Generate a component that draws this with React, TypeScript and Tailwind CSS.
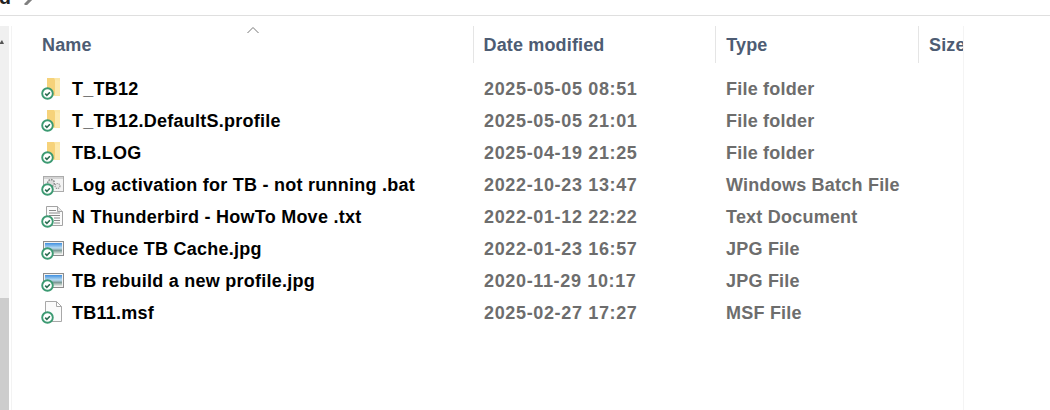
import React from 'react';

type Kind = 'folder' | 'bat' | 'txt' | 'jpg' | 'msf';

interface FileRow {
  name: string;
  date: string;
  type: string;
  kind: Kind;
}

const rows: FileRow[] = [
  { name: 'T_TB12', date: '2025-05-05 08:51', type: 'File folder', kind: 'folder' },
  { name: 'T_TB12.DefaultS.profile', date: '2025-05-05 21:01', type: 'File folder', kind: 'folder' },
  { name: 'TB.LOG', date: '2025-04-19 21:25', type: 'File folder', kind: 'folder' },
  { name: 'Log activation for TB - not running .bat', date: '2022-10-23 13:47', type: 'Windows Batch File', kind: 'bat' },
  { name: 'N Thunderbird - HowTo Move .txt', date: '2022-01-12 22:22', type: 'Text Document', kind: 'txt' },
  { name: 'Reduce TB Cache.jpg', date: '2022-01-23 16:57', type: 'JPG File', kind: 'jpg' },
  { name: 'TB rebuild a new profile.jpg', date: '2020-11-29 10:17', type: 'JPG File', kind: 'jpg' },
  { name: 'TB11.msf', date: '2025-02-27 17:27', type: 'MSF File', kind: 'msf' },
];

const KindShape = ({ kind }: { kind: Kind }) => {
  if (kind === 'folder') {
    return (
      <>
        <path d="M6 1h13v18H6z" fill="#fbe6a6" />
        <path d="M6 1h7l1 2v15l-8 1z" fill="#f6d27a" />
        <path d="M13 1l1 2v15h5V4l-5-1z" fill="#fde9ad" />
      </>
    );
  }
  if (kind === 'bat') {
    return (
      <>
        <rect x="2.500" y="3.500" width="20" height="15" fill="#f3f3f3" stroke="#ababab" />
        <rect x="3" y="4" width="19" height="2" fill="#d4d4d4" />
        <circle cx="10" cy="10" r="3.400" fill="#dcdcdc" stroke="#8d8d8d" strokeWidth="1.500" strokeDasharray="1.600 1" />
        <circle cx="16.500" cy="13" r="2.500" fill="#e8e8e8" stroke="#999999" strokeWidth="1.200" strokeDasharray="1.300 .8" />
      </>
    );
  }
  if (kind === 'txt') {
    return (
      <>
        <path d="M5.500 1.500h11l5 5v14h-16z" fill="#fbfbfb" stroke="#a3a3a3" />
        <path d="M16.500 1.500v5h5" fill="#e8e8e8" stroke="#a3a3a3" />
        <path d="M8 5.500h7M8 8h11M8 10.500h11M13 13h6M13 15.500h6M13 18h6" stroke="#8a8a8a" />
      </>
    );
  }
  if (kind === 'jpg') {
    return (
      <>
        <defs>
          <linearGradient id="sky" x1="0" y1="0" x2="0" y2="1">
            <stop offset="0" stopColor="#3f8fe0" />
            <stop offset=".45" stopColor="#b9dcf2" />
            <stop offset=".68" stopColor="#7d9a96" />
            <stop offset="1" stopColor="#e7ece6" />
          </linearGradient>
        </defs>
        <rect x="2.500" y="4.500" width="20" height="14" fill="#f2f2f2" stroke="#8d8d8d" />
        <rect x="4" y="6" width="17" height="11" fill="url(#sky)" />
      </>
    );
  }
  return <path d="M4.500 .5h11l5 5v15h-16zM15.500 .5v5h5" fill="#fbfbfb" stroke="#a8a8a8" />;
};

const FileIcon = ({ kind }: { kind: Kind }) => (
  <svg width="24" height="24" viewBox="0 0 24 24" className="shrink-0">
    <KindShape kind={kind} />
    <circle cx="6.500" cy="16.500" r="5.300" fill="#ffffff" stroke="#3c9a72" strokeWidth="1.900" />
    <path d="M4.200 16.600l1.700 1.700 3-3" fill="none" stroke="#2c6e52" strokeWidth="1.600" />
  </svg>
);

const HeaderCell = ({ label, className }: { label: string; className: string }) => (
  <div className={`flex h-[37px] items-center overflow-hidden whitespace-nowrap border-r border-[#e5e5e5] pt-[1px] ${className}`}>
    {label}
  </div>
);

export default function App() {
  return (
    <div className="flex h-[410px] w-[1050px] flex-col overflow-hidden bg-white font-['Liberation_Sans',Arial,sans-serif] text-[18px] font-bold">
      {/* breadcrumb strip, cut off at the top */}
      <div className="flex h-4 shrink-0 items-end overflow-hidden border-b border-[#dfdfdf]">
        <span className="ml-[-1px] mb-[8px] w-[25px] text-[19.5px] leading-none text-[#222]">d</span>
        <svg width="10" height="10" viewBox="0 0 10 10" className="mb-[10px]">
          <path d="M1 10l8-8" fill="none" stroke="#808080" strokeWidth="3" />
        </svg>
      </div>

      <div className="flex min-h-0 flex-1 pt-[10px]">
        {/* left scrollbar */}
        <div className="flex w-[9px] shrink-0 flex-col bg-[#f0f0f0]">
          <div className="h-[272px] shrink-0 overflow-hidden">
            <svg width="4" height="6" viewBox="0 0 4 6" className="mt-[13px]">
              <path d="M-1 5l3-4 2 4z" fill="#555555" />
            </svg>
          </div>
          <div className="flex-1 bg-[#cdcdcd]" />
        </div>
        <div className="w-[3px] shrink-0 border-r border-[#f3f3f3]" />

        <div className="w-[952px] shrink-0 border-r border-[#f4f4f4]">
          <div className="relative flex tracking-[0.15px] text-[#4d5c73]">
            <HeaderCell label="Name" className="w-[462px] pl-[30px]" />
            <HeaderCell label="Date modified" className="w-[243px] pl-[10px]" />
            <HeaderCell label="Type" className="w-[203px] pl-[10px]" />
            <div className="flex h-[37px] w-[44px] items-center overflow-hidden whitespace-nowrap pl-[10px] pt-[1px]">Size</div>
            <svg width="14" height="8" viewBox="0 0 14 8" className="absolute left-[234px] top-0">
              <path d="M1.500 7L7 1.500 12.500 7" fill="none" stroke="#777" />
            </svg>
          </div>

          <div className="pt-[10px]">
            {rows.map(row => (
              <div key={row.name} className="flex h-8 items-center">
                <div className="flex w-[462px] items-center gap-[7px] pl-[29px] tracking-[0.25px] text-black">
                  <FileIcon kind={row.kind} />
                  <span className="whitespace-nowrap">{row.name}</span>
                </div>
                <div className="w-[243px] whitespace-nowrap pl-[10px] tracking-[0.65px] text-[#6d6d6d]">{row.date}</div>
                <div className="whitespace-nowrap pl-[9px] tracking-[0.22px] text-[#6d6d6d]">{row.type}</div>
              </div>
            ))}
          </div>
        </div>
      </div>
    </div>
  );
}
